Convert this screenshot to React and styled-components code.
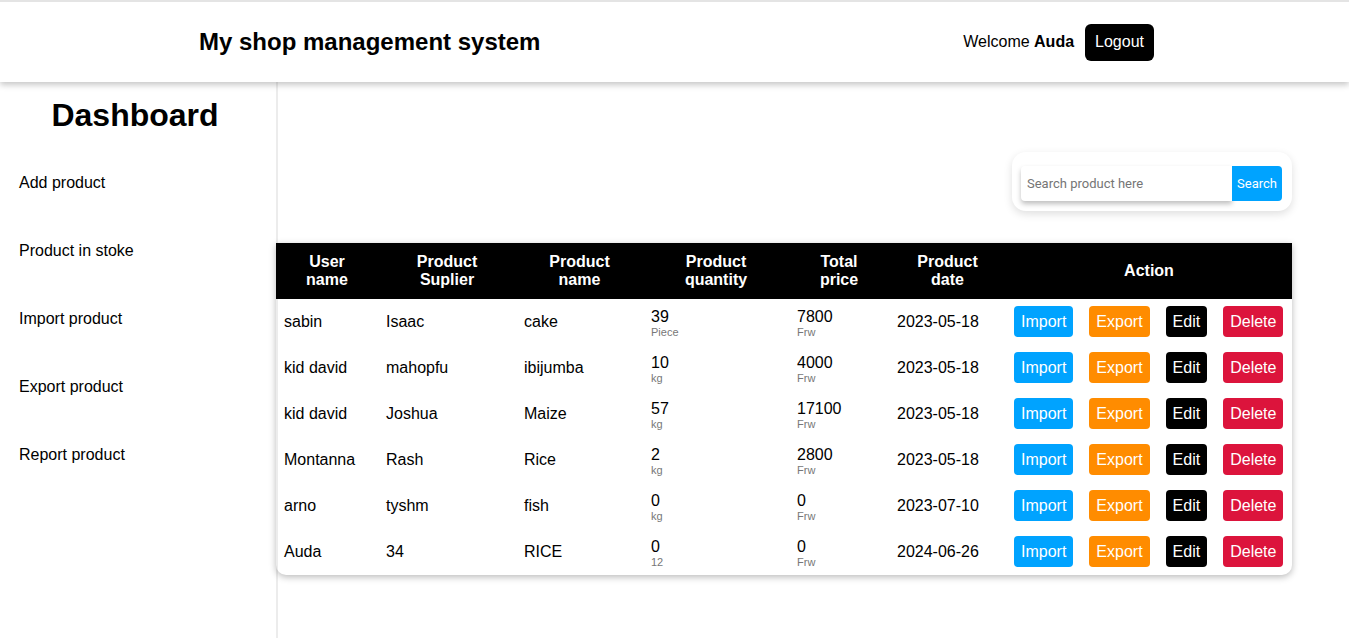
import React from "react";
import styled, { createGlobalStyle } from "styled-components";

const GlobalStyle = createGlobalStyle`
  * { box-sizing: border-box; }
  body {
    margin: 0;
    font-family: "Liberation Sans", Arial, sans-serif;
    color: #000;
    background: #fff;
  }
`;

const products = [
  { user: "sabin", suplier: "Isaac", name: "cake", qty: 39, unit: "Piece", price: 7800, date: "2023-05-18" },
  { user: "kid david", suplier: "mahopfu", name: "ibijumba", qty: 10, unit: "kg", price: 4000, date: "2023-05-18" },
  { user: "kid david", suplier: "Joshua", name: "Maize", qty: 57, unit: "kg", price: 17100, date: "2023-05-18" },
  { user: "Montanna", suplier: "Rash", name: "Rice", qty: 2, unit: "kg", price: 2800, date: "2023-05-18" },
  { user: "arno", suplier: "tyshm", name: "fish", qty: 0, unit: "kg", price: 0, date: "2023-07-10" },
  { user: "Auda", suplier: "34", name: "RICE", qty: 0, unit: "12", price: 0, date: "2024-06-26" },
];

const links = ["Add product", "Product in stoke", "Import product", "Export product", "Report product"];

const btnColors = {
  import: "#00a3ff",
  export: "#ff8c00",
  edit: "#000",
  delete: "#dc143c",
};

const App = () => {
  return (
    <Page>
      <GlobalStyle />
      {/* header */}
      <Header>
        <Title>My shop management system</Title>
        <UserBox>
          <span>
            Welcome <b>Auda</b>
          </span>
          <LogoutBtn>Logout</LogoutBtn>
        </UserBox>
      </Header>
      <Body>
        {/* sidebar */}
        <Sidebar>
          <SideTitle>Dashboard</SideTitle>
          <NavList>
            {links.map((l) => (
              <NavItem key={l}>{l}</NavItem>
            ))}
          </NavList>
        </Sidebar>
        {/* main */}
        <Main>
          <SearchRow>
            <SearchBox>
              <SearchInput placeholder="Search product here" />
              <SearchBtn>Search</SearchBtn>
            </SearchBox>
          </SearchRow>
          <TableCard>
            <Table>
              <colgroup>
                <col style={{ width: 102 }} />
                <col style={{ width: 138 }} />
                <col style={{ width: 127 }} />
                <col style={{ width: 146 }} />
                <col style={{ width: 100 }} />
                <col style={{ width: 117 }} />
                <col style={{ width: 286 }} />
              </colgroup>
              <thead>
                <tr>
                  <Th>User<br />name</Th>
                  <Th>Product<br />Suplier</Th>
                  <Th>Product<br />name</Th>
                  <Th>Product<br />quantity</Th>
                  <Th>Total<br />price</Th>
                  <Th>Product<br />date</Th>
                  <Th>Action</Th>
                </tr>
              </thead>
              <tbody>
                {products.map((p, i) => (
                  <Tr key={i}>
                    <Td>{p.user}</Td>
                    <Td>{p.suplier}</Td>
                    <Td>{p.name}</Td>
                    <Td>
                      <Value>{p.qty}</Value>
                      <Unit>{p.unit}</Unit>
                    </Td>
                    <Td>
                      <Value>{p.price}</Value>
                      <Unit>Frw</Unit>
                    </Td>
                    <Td>{p.date}</Td>
                    <Td>
                      <Actions>
                        <ActionBtn $kind="import">Import</ActionBtn>
                        <ActionBtn $kind="export">Export</ActionBtn>
                        <ActionBtn $kind="edit">Edit</ActionBtn>
                        <ActionBtn $kind="delete">Delete</ActionBtn>
                      </Actions>
                    </Td>
                  </Tr>
                ))}
              </tbody>
            </Table>
          </TableCard>
        </Main>
      </Body>
    </Page>
  );
};

const Page = styled.div`
  min-height: 638px;
  display: flex;
  flex-direction: column;
`;

const Header = styled.header`
  height: 82px;
  border-top: 2px solid #e4e4e4;
  display: flex;
  align-items: center;
  justify-content: space-between;
  padding: 0 195px 0 199px;
  box-shadow: 0 3px 6px rgba(0, 0, 0, 0.22);
  position: relative;
  z-index: 2;
  background: #fff;
`;

const Title = styled.h1`
  margin: 0;
  font-size: 24px;
  font-weight: 700;
`;

const UserBox = styled.div`
  display: flex;
  align-items: center;
  gap: 10px;
  font-size: 16px;
`;

const LogoutBtn = styled.button`
  background: #000;
  color: #fff;
  border: none;
  border-radius: 6px;
  font-family: inherit;
  font-size: 16px;
  height: 37px;
  padding: 0 10px;
  margin-left: 1px;
`;

const Body = styled.div`
  flex: 1;
  display: flex;
`;

const Sidebar = styled.aside`
  width: 278px;
  flex-shrink: 0;
  border-right: 2px solid #ececec;
  min-height: 556px;
`;

const SideTitle = styled.h2`
  margin: 15px 0 0;
  text-align: center;
  font-size: 32px;
  font-weight: 700;
  padding-right: 6px;
`;

const NavList = styled.nav`
  display: flex;
  flex-direction: column;
  gap: 50px;
  padding: 40px 0 0 19px;
`;

const NavItem = styled.a`
  font-size: 16px;
  line-height: 18px;
  color: #000;
`;

const Main = styled.main`
  flex: 1;
  margin-left: -2px;
  padding: 70px 57px 40px 0;
`;

const SearchRow = styled.div`
  display: flex;
  justify-content: flex-end;
  margin-bottom: 32px;
`;

const SearchBox = styled.div`
  width: 280px;
  height: 59px;
  border-radius: 14px;
  box-shadow: 0 3px 8px rgba(0, 0, 0, 0.13);
  display: flex;
  align-items: center;
  padding: 4px 10px 0 9px;
`;

const SearchInput = styled.input`
  flex: 1;
  min-width: 0;
  height: 35px;
  border: none;
  outline: none;
  border-radius: 4px 0 0 4px;
  box-shadow: 0 3px 5px rgba(0, 0, 0, 0.25);
  padding: 0 6px;
  font-family: Roboto, sans-serif;
  font-size: 13px;
  &::placeholder {
    color: #757575;
  }
`;

const SearchBtn = styled.button`
  width: 50px;
  height: 35px;
  border: none;
  background: #00a3ff;
  color: #fff;
  border-radius: 0 4px 4px 0;
  font-family: Roboto, sans-serif;
  font-size: 13px;
  padding: 0;
`;

const TableCard = styled.div`
  border-radius: 0 0 10px 10px;
  box-shadow: 0 2px 7px rgba(0, 0, 0, 0.28);
  overflow: hidden;
`;

const Table = styled.table`
  width: 100%;
  table-layout: fixed;
  border-collapse: collapse;
`;

const Th = styled.th`
  background: #000;
  color: #fff;
  font-size: 16px;
  line-height: 18px;
  font-weight: 700;
  height: 56px;
  padding: 0 8px;
  text-align: center;
`;

const Tr = styled.tr`
  height: 46px;
`;

const Td = styled.td`
  font-size: 16px;
  padding: 0 8px;
  vertical-align: middle;
  white-space: nowrap;
`;

const Value = styled.div`
  font-size: 16px;
  line-height: 17px;
  margin-top: 1px;
`;

const Unit = styled.div`
  font-size: 11px;
  line-height: 12px;
  margin-top: 1px;
  color: #777;
`;

const Actions = styled.div`
  display: flex;
  gap: 16px;
  padding-top: 1px;
  margin-top: -2px;
`;

const ActionBtn = styled.button`
  background: ${(p) => btnColors[p.$kind]};
  color: #fff;
  border: none;
  border-radius: 4px;
  font-family: inherit;
  font-size: 16px;
  height: 31px;
  padding: 0 7px;
`;

export default App;
